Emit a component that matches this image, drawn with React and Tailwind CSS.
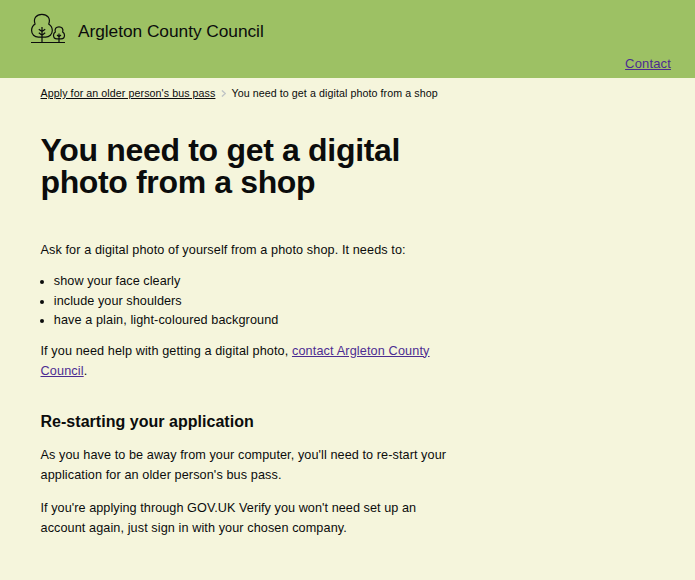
function TreesLogo() {
  return (
    <svg className="block h-8 w-[36px]" viewBox="0 0 36 32" fill="none" stroke="#0b0c0c" strokeWidth="1.2">
      <g transform="translate(0 -0.4)">
        <path d="M8.4 24.5C4.4 24.5 1.6 21.6 1.6 18C1.6 15.2 2.8 13 5.1 11.5C3 6 6.2 1.8 11.9 1.8C17.6 1.8 20.9 6 18.7 11.5C21 13 22.3 15.2 22.3 18C22.3 21.6 19.4 24.5 15.6 24.5Z" />
        <path d="M12 14.5V30M8.8 16.6L12 19L15.2 16.6M8.8 20.2L12 22.6L15.2 20.2" />
        <path d="M27 26.2C24.9 26.2 23.5 24.6 23.5 22.6C23.5 21.2 24.2 20 25.3 19.3C24.4 16.3 26.2 14.2 29 14.2C31.8 14.2 33.6 16.3 32.7 19.3C33.8 20 34.5 21.2 34.5 22.6C34.5 24.6 33 26.2 31 26.2Z" />
        <path d="M29 21V30M27 22.4L29 24.2L31 22.4" />
      </g>
      <path d="M1 29.5H35" />
    </svg>
  );
}

export default function App() {
  return (
    <div className="min-h-screen bg-[#f5f5dc] font-['Liberation_Sans',Arial,sans-serif] text-[12.67px] leading-5 tracking-[0.095px] text-[#0b0c0c]">
      <header className="flex h-[78px] flex-col justify-between bg-[#9dc164] pt-[13px] pr-[24px] pb-[4px] pl-[30px]">
        <div className="flex items-center">
          <TreesLogo />
          <span className="pt-[3px] pl-[12px] text-[17.33px] tracking-[-0.05px]">Argleton County Council</span>
        </div>
        <a href="#contact" className="self-end text-[13px] tracking-[0.16px] text-[#4c2c92] underline">Contact</a>
      </header>
      <div className="pl-[40.5px]">
        <nav className="flex h-[30px] items-center text-[10.67px] tracking-[0.08px]">
          <a href="#apply" className="underline">Apply for an older person's bus pass</a>
          <svg className="mr-[5px] ml-[6px] h-[7px] w-[5px]" viewBox="0 0 5 7" fill="none" stroke="#bfc4c6" strokeWidth="1.3">
            <path d="M.9 .4L4.3 3.5L.9 6.6" />
          </svg>
          <span>You need to get a digital photo from a shop</span>
        </nav>
        <main className="w-[420px]">
          <h1 className="pt-[26px] text-[32px] leading-[32px] font-bold tracking-[-0.31px]">
            You need to get a digital<br /><span className="tracking-[-0.36px]">photo from a shop</span>
          </h1>
          <p className="mt-[42px]">Ask for a digital photo of yourself from a photo shop. It needs to:</p>
          <ul className="mt-[12px] list-disc pl-[13.3px] leading-[19.5px]">
            <li className="tracking-[0.06px]">show your face clearly</li>
            <li className="tracking-[0.06px]">include your shoulders</li>
            <li>have a plain, light-coloured background</li>
          </ul>
          <p className="mt-[10px]">
            If you need help with getting a digital photo,{' '}
            <a href="#council" className="tracking-[0.14px] text-[#4c2c92] underline">contact Argleton County<br />Council</a>.
          </p>
          <h2 className="mt-[31px] text-base leading-5 font-bold tracking-[0.03px]">Re-starting your application</h2>
          <p className="mt-[13px] tracking-[0.08px]">As you have to be away from your computer, you'll need to re-start your<br /><span className="tracking-[0.1px]">application for an older person's bus pass.</span></p>
          <p className="mt-[13px] tracking-[0.05px]">If you're applying through GOV.UK Verify you won't need set up an<br /><span className="tracking-[0.09px]">account again, just sign in with your chosen company.</span></p>
        </main>
      </div>
    </div>
  );
}
